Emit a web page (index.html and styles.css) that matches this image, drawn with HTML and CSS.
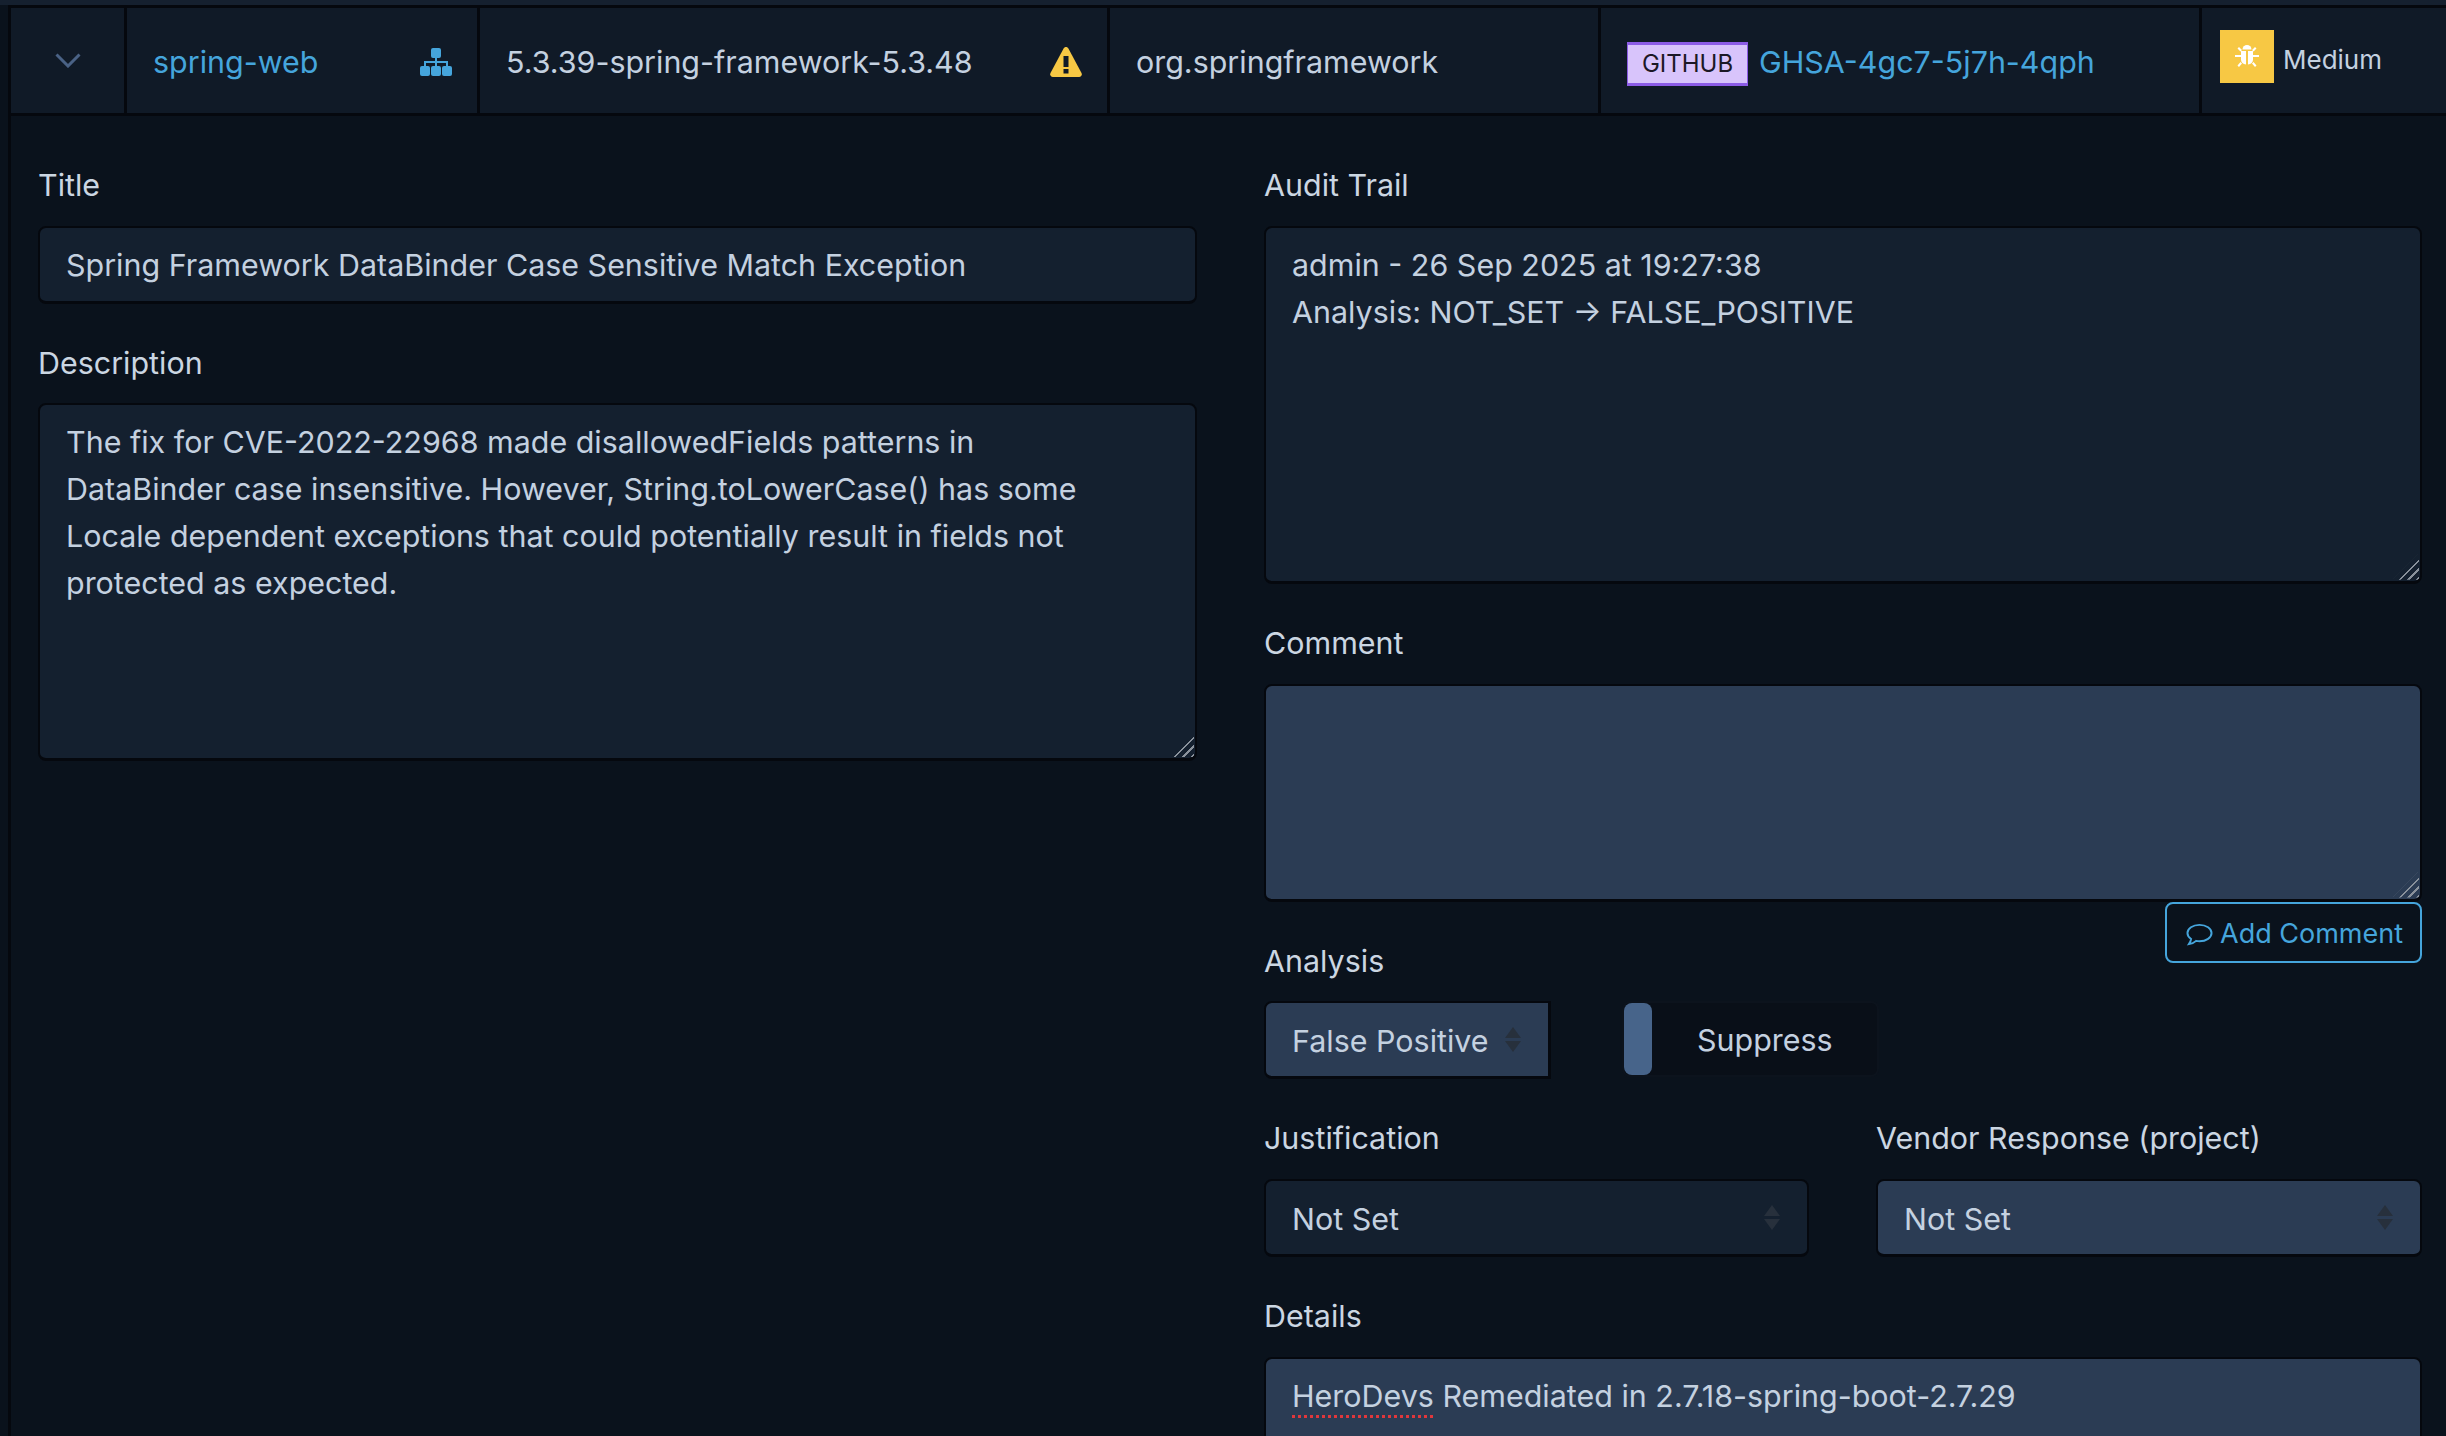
FILE: index.html
```html
<!DOCTYPE html>
<html lang="en">
<head>
    <meta charset="UTF-8">
    <title>Finding details</title>
    <link rel="stylesheet" href="styles.css">
</head>
<body>

<div class="page">
    <div class="finding-row">
        <div class="cell cell-toggle">
            <svg class="chevron" viewBox="0 0 26 15"><path d="M1.5 1.5 13 13 24.5 1.5" fill="none" stroke="#4a6285" stroke-width="3"/></svg>
        </div>
        <div class="cell cell-split">
            <a class="link">spring-web</a>
            <svg class="icon-tree" viewBox="0 0 32 28" fill="#45a5dc">
                <rect x="11" y="0" width="10" height="10" rx="2"/>
                <rect x="0" y="18" width="10" height="10" rx="2"/>
                <rect x="11" y="18" width="10" height="10" rx="2"/>
                <rect x="22" y="18" width="10" height="10" rx="2"/>
                <path d="M15 10h2v3h11v5h-2v-3H17v3h-2v-3H6v3H4v-5h11z"/>
            </svg>
        </div>
        <div class="cell cell-split">
            <span>5.3.39-spring-framework-5.3.48</span>
            <svg class="icon-warn" viewBox="0 0 32 30">
                <path d="M16 0c1 0 1.800.5 2.400 1.500L31.500 26c.9 1.800-.2 4-2.300 4H2.800C.7 30-.4 27.800.5 26L13.600 1.500C14.200.5 15 0 16 0z" fill="#f7c844"/>
                <rect x="13.500" y="9" width="5" height="11" fill="#101a27"/>
                <rect x="13.500" y="22" width="5" height="4.500" fill="#101a27"/>
            </svg>
        </div>
        <div class="cell">org.springframework</div>
        <div class="cell cell-vuln">
            <span class="badge-source">GITHUB</span>
            <a class="link">GHSA-4gc7-5j7h-4qph</a>
        </div>
        <div class="cell cell-severity">
            <span class="severity-box">
                <svg class="icon-bug" viewBox="0 0 24 24" fill="#fff">
                    <path d="M7.500 5.500a4.500 4.500 0 0 1 9 0z"/>
                    <path d="M6 7h5v13.500c-3-.3-5-2.300-5-5z"/>
                    <path d="M13 7h5v8.500c0 2.700-2 4.700-5 5z"/>
                    <path d="M0 11h6v2H0zM18 11h6v2h-6z"/>
                    <path d="M2.500 4.500 4 3l3 3-1.500 1.500zM21.500 4.500 20 3l-3 3 1.500 1.500zM2.500 21.500 4 23l3-3.500-1.500-1.500zM21.500 21.500 20 23l-3-3.500 1.500-1.500z"/>
                </svg>
            </span>
            <span class="severity-text">Medium</span>
        </div>
    </div>

    <div class="detail-grid">
        <div class="detail-col">
            <div class="field">
                <div class="field-label">Title</div>
                <div class="control">Spring Framework DataBinder Case Sensitive Match Exception</div>
            </div>
            <div class="field">
                <div class="field-label">Description</div>
                <div class="control area area-tall area-wrapped">The fix for CVE-2022-22968 made disallowedFields patterns in DataBinder case insensitive. However, String.toLowerCase() has some Locale dependent exceptions that could potentially result in fields not protected as expected.</div>
            </div>
        </div>

        <div class="detail-col">
            <div class="field">
                <div class="field-label">Audit Trail</div>
                <div class="control area area-tall">admin - 26 Sep 2025 at 19:27:38<br>Analysis: NOT_SET → FALSE_POSITIVE</div>
            </div>
            <div class="field field-flush">
                <div class="field-label">Comment</div>
                <div class="control area area-short active"></div>
            </div>
            <div class="comment-actions">
                <button class="btn-outline">
                    <svg class="icon-comment" viewBox="0 0 28 24"><path d="M14 1.500C7 1.500 1.500 5.300 1.500 10c0 2.500 1.500 4.600 3.800 6.100-.2 1.700-1 3.600-2.300 5.400 3-.4 5.700-1.700 7.500-3.400 1.100.2 2.300.4 3.500.4 7 0 12.500-3.800 12.500-8.500S21 1.500 14 1.500z" fill="none" stroke="#45a5dc" stroke-width="2"/></svg>
                    Add Comment
                </button>
            </div>
            <div class="field">
                <div class="field-label">Analysis</div>
                <div class="analysis-row">
                    <div class="control select select-analysis active">False Positive<span class="updown"></span></div>
                    <div class="switch">
                        <span class="switch-handle"></span>
                        <span class="switch-text">Suppress</span>
                    </div>
                </div>
            </div>
            <div class="field-pair">
                <div class="field">
                    <div class="field-label">Justification</div>
                    <div class="control select">Not Set<span class="updown"></span></div>
                </div>
                <div class="field">
                    <div class="field-label">Vendor Response (project)</div>
                    <div class="control select active">Not Set<span class="updown"></span></div>
                </div>
            </div>
            <div class="field">
                <div class="field-label">Details</div>
                <div class="control area area-short active"><span class="misspelled">HeroDevs</span> Remediated in 2.7.18-spring-boot-2.7.29</div>
            </div>
        </div>
    </div>
</div>

</body>
</html>
```

FILE: styles.css
```css
html, body {
    margin: 0;
    height: 100%;
    overflow: hidden;
}
body {
    background-color: #0a121c;
    color: #c4d1e0;
    font-family: Inter, "Liberation Sans", sans-serif;
    font-size: 30.45px;
    line-height: 46.8px;
}
.page {
    height: 100%;
    border-top: 5px solid #15202f;
    box-sizing: border-box;
}

/* table row on top */
.finding-row {
    display: grid;
    grid-template-columns: 116px 353px 630px 491px 601px 1fr;
    margin-left: 8px;
    height: 111px;
    border-top: 3px solid #05080e;
    border-bottom: 3px solid #05080e;
    border-left: 3px solid #05080e;
    box-sizing: border-box;
    background-color: #101a27;
}
.cell {
    display: flex;
    align-items: center;
    padding: 3px 28px 0 26px;
    border-right: 3px solid #05080e;
    white-space: nowrap;
    box-sizing: border-box;
    min-width: 0;
}
.cell:last-child {
    border-right: none;
}
.cell-toggle {
    justify-content: center;
    padding: 0;
}
.cell-split {
    justify-content: space-between;
}
.cell-vuln {
    gap: 11px;
}
.cell-severity {
    padding: 0 0 9px 18px;
    gap: 9px;
}
.link {
    color: #45a5dc;
}
.chevron {
    width: 26px;
    height: 15px;
}
.icon-tree {
    width: 32px;
    height: 28px;
    margin-right: -3px;
}
.icon-warn {
    width: 32px;
    height: 30px;
    margin-right: -3px;
}
.badge-source {
    flex: none;
    width: 121px;
    height: 44px;
    margin-top: 4px;
    background-color: #d8c4fb;
    border: 1px solid #8c5ce6;
    border-width: 3px 1px;
    box-sizing: border-box;
    color: #1c1826;
    font-size: 24px;
    line-height: 38px;
    text-align: center;
}
.severity-box {
    display: flex;
    align-items: center;
    justify-content: center;
    width: 54px;
    height: 53px;
    background-color: #f7c844;
}
.icon-bug {
    width: 24px;
    height: 24px;
}
.severity-text {
    margin-top: 9px;
    font-size: 26px;
}

/* form below the row */
.detail-grid {
    display: grid;
    grid-template-columns: 1159px 1158px;
    gap: 67px;
    margin-left: 8px;
    padding: 46px 0 0 27px;
    border-left: 3px solid #05080e;
}
.field {
    margin-bottom: 36px;
}
.field-flush {
    margin-bottom: 0;
}
.field-label {
    margin-bottom: 17px;
    color: #cbd6e2;
}
.control {
    padding: 14px 27px 12px 26px;
    border: 1px solid #05080e;
    border-width: 2px 2px 3px;
    border-radius: 8px;
    background-color: #14202f;
    box-sizing: border-box;
}
.control.active {
    background-color: #2b3c54;
}
.area {
    position: relative;
}
.area::after {
    content: "";
    position: absolute;
    right: 1px;
    bottom: 1px;
    width: 26px;
    height: 26px;
    background: repeating-linear-gradient(135deg, transparent 0 4px, #8a929c 4px 6px);
    clip-path: polygon(100% 0, 100% 100%, 0 100%);
}
.area-tall {
    height: 358px;
}
.area-wrapped {
    padding-right: 98px;
}
.area-short {
    height: 218px;
}
.comment-actions {
    display: flex;
    justify-content: flex-end;
    height: 36px;
}
.btn-outline {
    display: flex;
    align-items: center;
    gap: 7px;
    flex: none;
    height: 61px;
    width: 257px;
    padding: 3px 0 0 19px;
    background: none;
    border: 2px solid #45a5dc;
    border-radius: 8px;
    box-sizing: border-box;
    color: #45a5dc;
    font-family: inherit;
    font-size: 27px;
}
.icon-comment {
    width: 27px;
    height: 24px;
    margin-top: 3px;
}
.analysis-row {
    display: flex;
    gap: 71px;
}
.select {
    display: flex;
    justify-content: space-between;
    align-items: center;
    height: 78px;
    padding: 3px 27px 0 26px;
}
.select-analysis {
    width: 287px;
    flex: none;
    border-radius: 8px 0 0 8px;
    border-right-width: 3px;
}
.updown {
    display: flex;
    flex-direction: column;
    gap: 3px;
    flex: none;
    margin-top: -3px;
}
.updown::before, .updown::after {
    content: "";
    width: 0;
    height: 0;
    border-left: 8px solid transparent;
    border-right: 8px solid transparent;
}
.updown::before {
    border-bottom: 11px solid #27303c;
}
.updown::after {
    border-top: 11px solid #27303c;
}
.switch {
    display: flex;
    align-items: center;
    width: 257px;
    height: 76px;
    background-color: #090f18;
    border: 2px solid #0c131d;
    border-radius: 8px;
    box-sizing: border-box;
}
.switch-handle {
    width: 28px;
    height: 72px;
    background-color: #47648a;
    border-radius: 8px;
}
.switch-text {
    margin: 3px 0 0 45px;
}
.field-pair {
    display: grid;
    grid-template-columns: 545px 546px;
    gap: 67px;
}
.misspelled {
    text-decoration: underline dotted #e0373c 3px;
    text-underline-offset: 8px;
}
```
